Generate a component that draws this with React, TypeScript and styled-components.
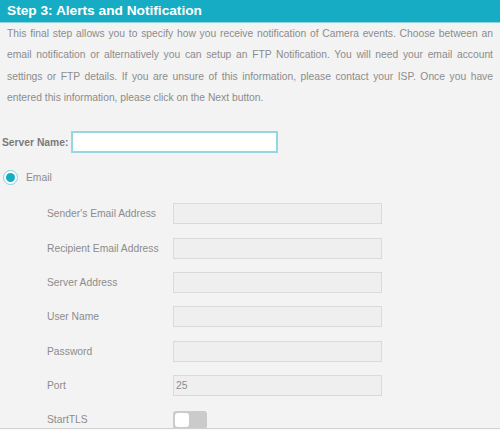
import React from "react";
import styled, { createGlobalStyle } from "styled-components";

const Global = createGlobalStyle`
  html, body { margin: 0; padding: 0; background: #f9f9f9; }
  body { font-family: Arial, "Liberation Sans", Helvetica, sans-serif; }
`;

const Panel = styled.div`
  width: 500px;
  height: 428px;
  overflow: hidden;
  background: #f3f3f3;
  border-bottom: 1px solid #d2d2d2;
  display: flex;
  flex-direction: column;
`;

const Header = styled.div`
  flex: none;
  height: 22px;
  background: #16adc4;
  border-bottom: 1px solid #8ed3de;
  padding-left: 7px;
  display: flex;
  align-items: center;
`;

const Title = styled.h1`
  margin: 0;
  font-size: 13.7px;
  font-weight: bold;
  color: #ffffff;
  line-height: 22px;
`;

const Intro = styled.p`
  flex: none;
  margin: 0;
  padding: 0 7px;
  font-size: 10.3px;
  line-height: 21.3px;
  color: #8c8c8c;
  text-align: justify;
`;

const ServerRow = styled.div`
  flex: none;
  margin-top: 23px;
  padding-left: 2px;
  display: flex;
  align-items: center;
  gap: 3px;
  height: 22px;
`;

const BoldLabel = styled.label`
  font-size: 10.3px;
  font-weight: bold;
  color: #7a7a7a;
  width: 66px;
  white-space: nowrap;
`;

const ServerInput = styled.input`
  box-sizing: border-box;
  width: 207px;
  height: 22px;
  background: #ffffff;
  border: 2px solid #93d7e1;
  outline: none;
  margin: 0;
`;

const RadioRow = styled.div`
  flex: none;
  margin-top: 14.5px;
  height: 20px;
  padding-left: 3px;
  display: flex;
  align-items: center;
  gap: 8px;
`;

const Radio = styled.span`
  box-sizing: border-box;
  width: 15px;
  height: 15px;
  border-radius: 50%;
  border: 1.5px solid #7fd0dc;
  background: #ffffff;
  display: flex;
  align-items: center;
  justify-content: center;
  &::after {
    content: "";
    width: 9px;
    height: 9px;
    border-radius: 50%;
    background: #16adc4;
  }
`;

const RadioLabel = styled.span`
  font-size: 10.3px;
  color: #8c8c8c;
`;

const Fields = styled.div`
  flex: none;
  margin-top: 9px;
  display: flex;
  flex-direction: column;
`;

const FieldRow = styled.div`
  height: 34.33px;
  display: grid;
  grid-template-columns: 126px 209px;
  align-items: center;
  padding-left: 47px;
`;

const FieldLabel = styled.span`
  font-size: 10.3px;
  color: #8c8c8c;
  white-space: nowrap;
`;

const FieldInput = styled.input`
  box-sizing: border-box;
  width: 209px;
  height: 21px;
  margin: 0;
  padding: 0 2px;
  background: #efefef;
  border: 1px solid #dadada;
  font-family: Arial, "Liberation Sans", sans-serif;
  font-size: 10.3px;
  color: #8c8c8c;
  outline: none;
`;

const Toggle = styled.span`
  box-sizing: border-box;
  width: 34px;
  height: 18px;
  border-radius: 3px;
  background: #cbcbcb;
  padding: 2px;
  display: flex;
  align-items: center;
  &::before {
    content: "";
    width: 14px;
    height: 14px;
    border-radius: 3px;
    background: #ffffff;
  }
`;

const fields: { label: string; value?: string }[] = [
  { label: "Sender's Email Address" },
  { label: "Recipient Email Address" },
  { label: "Server Address" },
  { label: "User Name" },
  { label: "Password" },
  { label: "Port", value: "25" },
];

export default function App() {
  return (
    <>
      <Global />
      <Panel>
        <Header>
          <Title>Step 3: Alerts and Notification</Title>
        </Header>
        <Intro>
          This final step allows you to specify how you receive notification of Camera events. Choose between an
          email notification or alternatively you can setup an FTP Notification. You will need your email account
          settings or FTP details. If you are unsure of this information, please contact your ISP. Once you have
          entered this information, please click on the Next button.
        </Intro>
        <ServerRow>
          <BoldLabel>Server Name:</BoldLabel>
          <ServerInput type="text" />
        </ServerRow>
        <RadioRow>
          <Radio />
          <RadioLabel>Email</RadioLabel>
        </RadioRow>
        <Fields>
          {fields.map((f) => (
            <FieldRow key={f.label}>
              <FieldLabel>{f.label}</FieldLabel>
              <FieldInput type="text" disabled defaultValue={f.value ?? ""} />
            </FieldRow>
          ))}
          <FieldRow>
            <FieldLabel>StartTLS</FieldLabel>
            <Toggle />
          </FieldRow>
        </Fields>
      </Panel>
    </>
  );
}
